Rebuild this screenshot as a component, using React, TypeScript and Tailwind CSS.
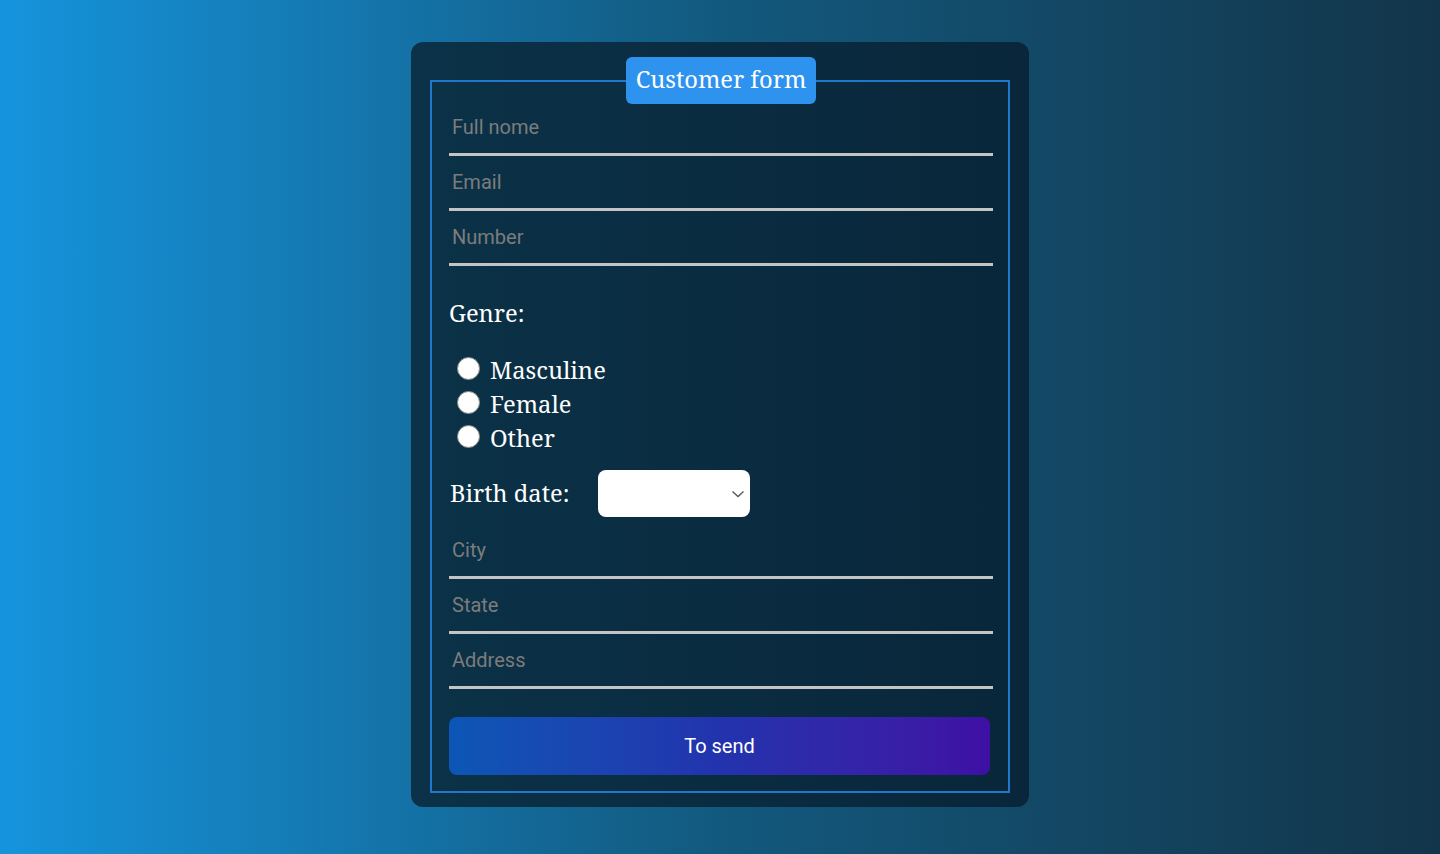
import React from "react";

const serif = { fontFamily: "'Noto Serif', 'DejaVu Serif', serif" };

function Field({ ph }: { ph: string }) {
  return (
    <input
      type="text"
      placeholder={ph}
      className="block w-[544px] h-[55px] bg-transparent border-b-[3px] border-[#c4c4c4] px-[3px] text-[20px] text-white placeholder:text-[#7c7c7c] outline-none font-['Roboto',sans-serif]"
    />
  );
}

function Radio({ label }: { label: string }) {
  return (
    <label className="flex items-center h-[34px] pl-[8px]">
      <span className="w-[23px] h-[23px] rounded-full bg-white border-[1.5px] border-[#858585] -mt-[5px]" />
      <span className="ml-[10px] text-[23.7px] text-white leading-none" style={serif}>
        {label}
      </span>
    </label>
  );
}

export default function App() {
  return (
    <div className="min-h-[854px] w-full bg-gradient-to-r from-[#1594dd] via-[#12597e] to-[#12354a] flex justify-center pt-[42px]">
      <div className="w-[618px] h-[765px] rounded-[12px] bg-gradient-to-r from-[#0b3248] to-[#09263a] px-[19px] pt-[15px] pb-[14px]">
        <fieldset className="w-[580px] min-w-0 border-2 border-[#2177cc] pl-[17px] pr-[15px] pb-[16px]">
          <legend className="mx-auto bg-[#2e93ee] rounded-[6px] h-[47px] px-[9.5px] text-[23.7px] text-white leading-[45px]" style={serif}>
            Customer form
          </legend>
          <div className="-mt-[3px]">
            <Field ph="Full nome" />
            <Field ph="Email" />
            <Field ph="Number" />
          </div>
          <div className="mt-[31px] text-[23.7px] text-white h-[33px] leading-[33px]" style={serif}>
            Genre:
          </div>
          <div className="mt-[24px] flex flex-col">
            <Radio label="Masculine" />
            <Radio label="Female" />
            <Radio label="Other" />
          </div>
          <div className="mt-[14px] flex items-center h-[47px]">
            <span className="text-[23.7px] text-white pl-[1px]" style={serif}>
              Birth date:
            </span>
            <div className="ml-[29px] w-[152px] h-[47px] bg-white rounded-[8px] flex items-center justify-end pr-[5px]">
              <svg width="14" height="8" viewBox="0 0 14 8" fill="none">
                <path d="M1.5 1.5 L7 6.5 L12.5 1.5" stroke="#555" strokeWidth="1.3" />
              </svg>
            </div>
          </div>
          <div className="mt-[7px]">
            <Field ph="City" />
            <Field ph="State" />
            <Field ph="Address" />
          </div>
          <button className="mt-[28px] w-[541px] h-[58px] rounded-[8px] bg-gradient-to-r from-[#0b56b6] via-[#2233ad] to-[#3e0fa4] text-white text-[20px] font-['Roboto',sans-serif]">
            To send
          </button>
        </fieldset>
      </div>
    </div>
  );
}
